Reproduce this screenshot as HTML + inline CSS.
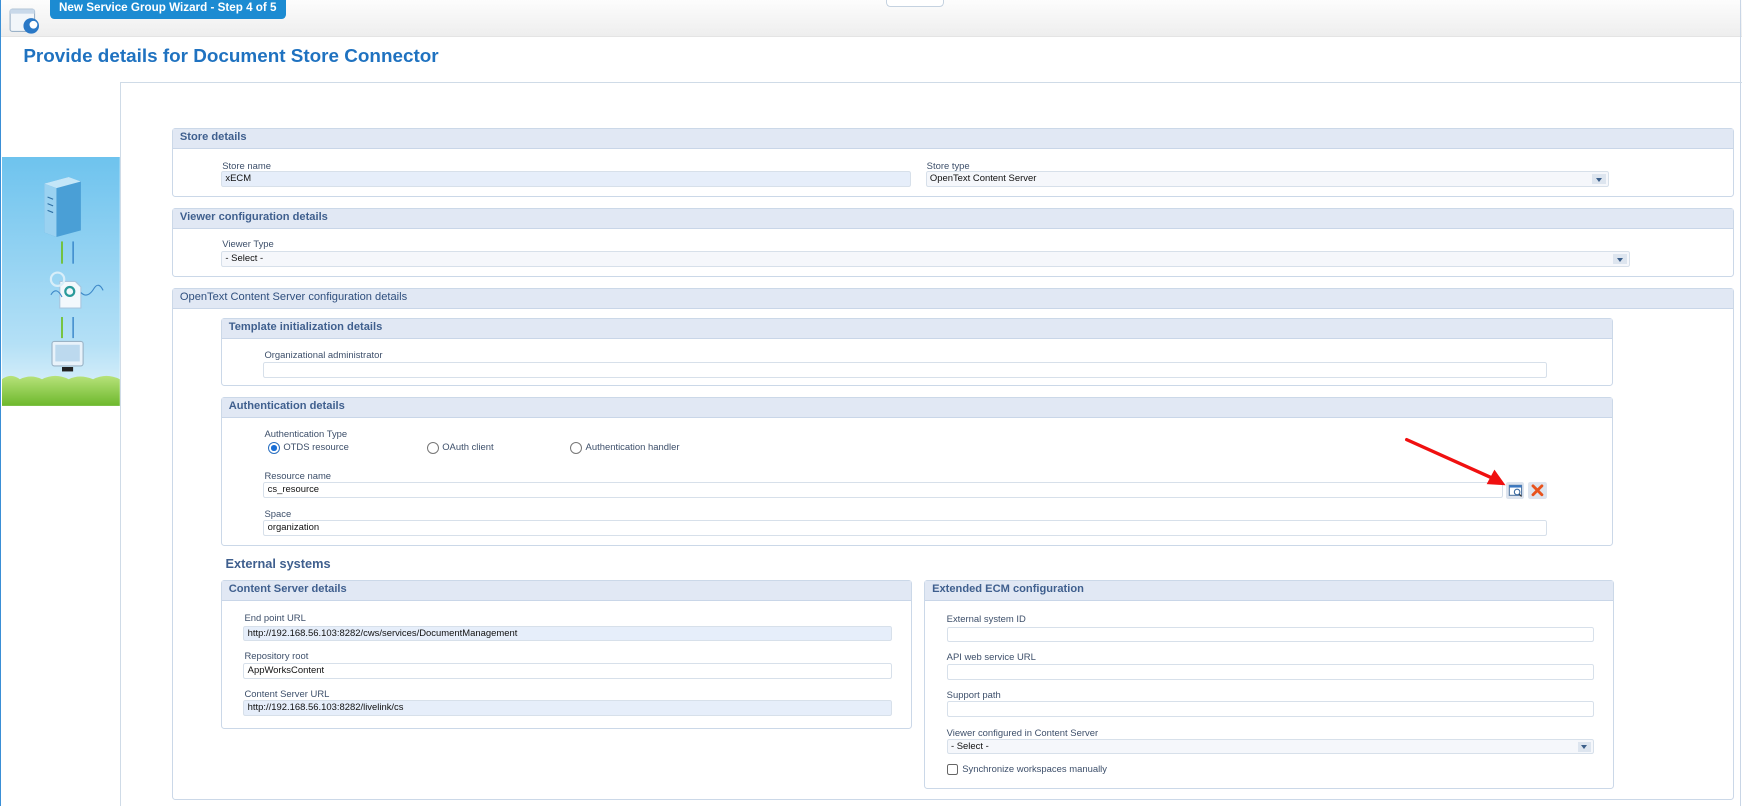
<!DOCTYPE html>
<html><head><meta charset="utf-8"><style>
html,body{margin:0;padding:0;background:#fff;overflow:hidden}
#w{zoom:1.1111;position:relative;width:1568px;height:725px;font-family:"Liberation Sans",sans-serif;color:#333}
.a{position:absolute}
.hdr{left:0;top:0;width:1568px;height:32px;background:linear-gradient(#fdfdfd,#eeeeee);border-bottom:1px solid #e4e4e4}
.tab{left:45px;top:0;width:212px;height:17px;background:#1c8bd2;border-radius:0 0 4px 4px;color:#fff;font-weight:bold;font-size:10.5px;line-height:15px;text-align:center}
.ttl{left:21px;top:41px;font-size:17px;font-weight:bold;color:#1f72c0}
.panel{border:1px solid #cbd8e8;border-radius:3px;background:#fff;box-sizing:border-box}
.ph{position:absolute;left:0;top:0;right:0;height:17px;background:#e1e8f4;border-bottom:1px solid #c9d6e8;color:#3f5f8e;font-weight:bold;font-size:10px;line-height:16px;padding-left:6px}
.lb{position:absolute;font-size:8.5px;color:#3d4f6a}
.in{position:absolute;height:14px;box-sizing:border-box;border:1px solid #d7e0ea;border-radius:2px;background:#fff;font-size:8.5px;line-height:13px;padding-left:3px;color:#111}
.in.f{background:#e6eefa}
.sel{background:#f5f7fb}
.arr{position:absolute;right:2px;top:2px;width:12px;height:9px;background:#dde5ef}
.arr:after{content:"";position:absolute;left:3px;top:3px;border-left:3px solid transparent;border-right:3px solid transparent;border-top:4px solid #3b5f8a}
.rad{position:absolute;width:9px;height:9px;border:1px solid #777;border-radius:50%;background:#fff}
</style></head><body><div id="w">
<div class="a hdr"></div>
<div class="a" style="left:0;top:0;width:1px;height:725px;background:#3a8fd6"></div>
<div class="a" style="left:1566px;top:0;width:1px;height:725px;background:#c9d6e6"></div>
<svg class="a" style="left:8px;top:6px" width="28" height="26"><rect x="1" y="2" width="22" height="20" rx="2" fill="#f2f6fa" stroke="#9bb2c8"/><rect x="1" y="2" width="22" height="4" fill="#c9d9ea"/><circle cx="20" cy="17" r="7" fill="#2a78c6"/><circle cx="22" cy="16" r="3.5" fill="#fff"/></svg>
<div class="a tab">New Service Group Wizard - Step 4 of 5</div>
<div class="a" style="left:797px;top:0;width:51px;height:5px;border:1px solid #c5d2e0;border-top:0;border-radius:0 0 4px 4px;background:#fff"></div>
<div class="a ttl">Provide details for Document Store Connector</div>
<div class="a" style="left:108px;top:74px;width:1460px;height:660px;border-left:1px solid #cfdbe7;border-top:1px solid #cfdbe7"></div>
<!-- left image -->
<svg class="a" style="left:2px;top:141px" width="106" height="224">
<defs><linearGradient id="sk" x1="0" y1="0" x2="0" y2="1"><stop offset="0" stop-color="#6ec3ee"/><stop offset="0.75" stop-color="#b4e0f6"/><stop offset="1" stop-color="#e6f5fb"/></linearGradient>
<linearGradient id="gr" x1="0" y1="0" x2="0" y2="1"><stop offset="0" stop-color="#b7e27a"/><stop offset="1" stop-color="#6db82c"/></linearGradient></defs>
<rect width="106" height="224" fill="url(#sk)"/>
<path d="M38 24 L60 18 L71 22 L71 66 L49 72 L38 68Z" fill="#4a9fd6"/><path d="M38 24 L49 28 L49 72 L38 68Z" fill="#9ad2f1"/><path d="M38 24 L60 18 L71 22 L49 28Z" fill="#c4e6f8"/>
<line x1="41" y1="36" x2="46" y2="38" stroke="#2d6fa4"/><line x1="41" y1="42" x2="46" y2="44" stroke="#2d6fa4"/><line x1="41" y1="48" x2="46" y2="50" stroke="#2d6fa4"/>
<line x1="54" y1="96" x2="54" y2="76" stroke="#6cbf1e" stroke-width="1.5"/><line x1="64" y1="76" x2="64" y2="96" stroke="#2f7fc6" stroke-width="1.2"/>
<path d="M52 112 L66 112 L71 117 L71 136 L52 136Z" fill="#f3f8fc" stroke="#a9c6de"/><circle cx="61" cy="121" r="4" fill="none" stroke="#2a9a9a" stroke-width="2"/>
<path d="M44 124 q5 -8 10 2 M71 122 q6 6 12 -4 q4 -6 8 2" stroke="#3d88c8" fill="none"/>
<circle cx="50" cy="110" r="6" fill="none" stroke="#d8eef9" stroke-width="2"/>
<line x1="54" y1="163" x2="54" y2="144" stroke="#6cbf1e" stroke-width="1.5"/><line x1="64" y1="144" x2="64" y2="163" stroke="#2f7fc6" stroke-width="1.2"/>
<rect x="45" y="166" width="28" height="22" rx="2" fill="#e8f2fa" stroke="#9ab3c6"/><rect x="48" y="169" width="22" height="15" fill="#bcd9ee"/><rect x="54" y="189" width="10" height="4" fill="#222"/>
<path d="M0 200 q8 -6 16 0 q10 -5 20 0 q12 -6 24 0 q10 -5 22 0 q12 -6 24 0 L106 224 L0 224Z" fill="url(#gr)"/>
</svg>
<!-- Store details -->
<div class="a panel" style="left:155px;top:115px;width:1406px;height:62px"><div class="ph">Store details</div></div>
<div class="lb" style="left:200px;top:145px">Store name</div>
<div class="in f" style="left:199px;top:154px;width:621px">xECM</div>
<div class="lb" style="left:834px;top:145px">Store type</div>
<div class="in sel" style="left:833px;top:154px;width:615px">OpenText Content Server<div class="arr"></div></div>
<!-- Viewer -->
<div class="a panel" style="left:155px;top:187px;width:1406px;height:62px"><div class="ph">Viewer configuration details</div></div>
<div class="lb" style="left:200px;top:215px">Viewer Type</div>
<div class="in sel" style="left:199px;top:226px;width:1268px">- Select -<div class="arr"></div></div>
<!-- OpenText -->
<div class="a panel" style="left:155px;top:259px;width:1406px;height:461px"><div class="ph" style="font-weight:normal;color:#2f4f7e">OpenText Content Server configuration details</div></div>
<div class="a panel" style="left:199px;top:286px;width:1253px;height:61px"><div class="ph">Template initialization details</div></div>
<div class="lb" style="left:238px;top:315px">Organizational administrator</div>
<div class="in" style="left:237px;top:326px;width:1155px"></div>
<div class="a panel" style="left:199px;top:357px;width:1253px;height:134px"><div class="ph">Authentication details</div></div>
<div class="lb" style="left:238px;top:386px">Authentication Type</div>
<div class="rad" style="left:241px;top:398px;border-color:#2a6fc0"><div style="position:absolute;left:2px;top:2px;width:5px;height:5px;border-radius:50%;background:#1a6fd6"></div></div>
<div class="lb" style="left:255px;top:398px">OTDS resource</div>
<div class="rad" style="left:384px;top:398px"></div><div class="lb" style="left:398px;top:398px">OAuth client</div>
<div class="rad" style="left:513px;top:398px"></div><div class="lb" style="left:527px;top:398px">Authentication handler</div>
<div class="lb" style="left:238px;top:424px">Resource name</div>
<div class="in" style="left:237px;top:434px;width:1116px">cs_resource</div>
<div class="a" style="left:1355px;top:434px;width:17px;height:15px;background:#dde4ee;border-radius:2px"><svg width="17" height="15"><rect x="3" y="3" width="11" height="9" fill="#fff" stroke="#5a7da6"/><rect x="3" y="3" width="11" height="2" fill="#3a78c2"/><circle cx="10" cy="9" r="2.5" fill="none" stroke="#3a6aa0"/><line x1="12" y1="11" x2="14" y2="13" stroke="#333"/></svg></div>
<div class="a" style="left:1375px;top:434px;width:17px;height:15px;background:#dde4ee;border-radius:2px"><svg width="17" height="15"><path d="M4.5 3.5 L12.5 11.5 M12.5 3.5 L4.5 11.5" stroke="#e8531d" stroke-width="2.6" stroke-linecap="round"/></svg></div>
<div class="lb" style="left:238px;top:458px">Space</div>
<div class="in" style="left:237px;top:468px;width:1155px">organization</div>
<div class="a" style="left:203px;top:500px;font-size:11.5px;font-weight:bold;color:#3f5f8e">External systems</div>
<!-- Content Server details -->
<div class="a panel" style="left:199px;top:522px;width:622px;height:134px"><div class="ph">Content Server details</div></div>
<div class="lb" style="left:220px;top:552px">End point URL</div>
<div class="in f" style="left:219px;top:563px;width:584px">http://192.168.56.103:8282/cws/services/DocumentManagement</div>
<div class="lb" style="left:220px;top:586px">Repository root</div>
<div class="in" style="left:219px;top:597px;width:584px">AppWorksContent</div>
<div class="lb" style="left:220px;top:620px">Content Server URL</div>
<div class="in f" style="left:219px;top:630px;width:584px">http://192.168.56.103:8282/livelink/cs</div>
<!-- Extended ECM -->
<div class="a panel" style="left:832px;top:522px;width:621px;height:188px"><div class="ph">Extended ECM configuration</div></div>
<div class="lb" style="left:852px;top:553px">External system ID</div>
<div class="in" style="left:852px;top:564px;width:583px"></div>
<div class="lb" style="left:852px;top:587px">API web service URL</div>
<div class="in" style="left:852px;top:598px;width:583px"></div>
<div class="lb" style="left:852px;top:621px">Support path</div>
<div class="in" style="left:852px;top:631px;width:583px"></div>
<div class="lb" style="left:852px;top:655px">Viewer configured in Content Server</div>
<div class="in sel" style="left:852px;top:665px;width:583px">- Select -<div class="arr"></div></div>
<div class="a" style="left:852px;top:688px;width:8px;height:8px;border:1px solid #666;border-radius:2px;background:#fff"></div>
<div class="lb" style="left:866px;top:688px">Synchronize workspaces manually</div>
<!-- red arrow -->
<svg class="a" style="left:1260px;top:390px" width="100" height="52"><line x1="6" y1="6" x2="84" y2="41" stroke="#f01010" stroke-width="3" stroke-linecap="round"/><path d="M95 47 L78 46 L85 33Z" fill="#f01010"/></svg>
</div></body></html>
